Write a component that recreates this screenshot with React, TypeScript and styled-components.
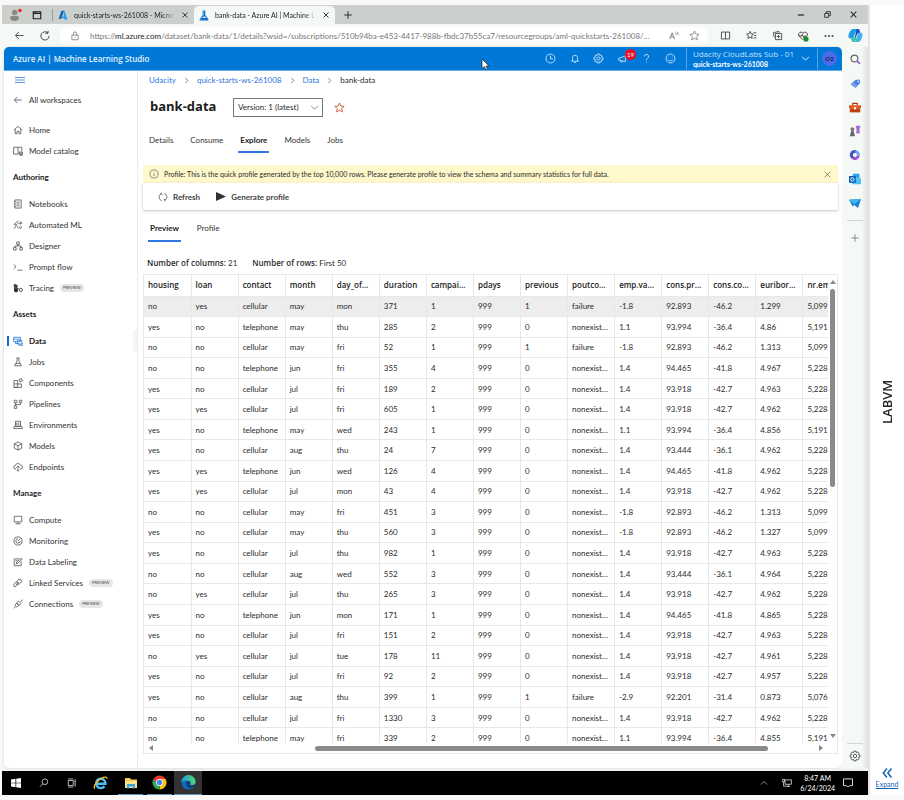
import React from "react";
import styled, { createGlobalStyle, css } from "styled-components";

const GlobalStyle = createGlobalStyle`
  *, *::before, *::after { box-sizing: border-box; }
  body { margin: 0; background: #f9f9f9; }
  body, button, select, input { font-family: Lato, "Open Sans", sans-serif; font-size: 8px; color: #2b2b2b; }
  button { border: 0; padding: 0; background: none; cursor: pointer; }
  h1, h2, ul, p { margin: 0; padding: 0; }
  ul { list-style: none; }
  svg { display: block; flex: none; }
`;

const wideBold = css`
  font-family: "Open Sans", sans-serif;
  font-weight: 600;
`;

/* ---------- frame ---------- */

const Screen = styled.div`
  display: flex;
  height: 100vh;
  min-height: 560px;
  padding: 5px 0 5px 2px;
`;

const Desktop = styled.div`
  position: relative;
  display: flex;
  flex: 1;
  flex-direction: column;
  min-width: 0;
  background: #f0f3f2;
`;

const LabPanel = styled.aside`
  display: flex;
  flex-direction: column;
  align-items: center;
  width: 36px;
  padding: 32px 0 6px;
  background: #fff;
  border-left: 2px solid #e4e4e4;
`;

const LabName = styled.div`
  display: flex;
  flex: 1;
  align-items: center;
  justify-content: center;
  writing-mode: vertical-rl;
  rotate: 180deg;
  font: 600 13px "Open Sans", sans-serif;
  color: #222;
`;

const ExpandLink = styled.a`
  display: flex;
  flex-direction: column;
  align-items: center;
  font-size: 7px;
  line-height: 10px;
  color: #1565b5;
`;

/* ---------- browser chrome ---------- */

const TabStrip = styled.div`
  display: flex;
  align-items: center;
  height: 19px;
  padding-left: 8px;
  background: #cbd0cc;
`;

const StripButton = styled.button<{ $wide?: boolean }>`
  display: grid;
  place-items: center;
  width: ${(p) => (p.$wide ? "30px" : "26px")};
  height: 18px;
`;

const WindowButtons = styled.div`
  display: flex;
  margin: 0 2px 0 auto;
`;

const BrowserTab = styled.div<{ $active?: boolean }>`
  display: flex;
  align-items: center;
  align-self: flex-end;
  gap: 6px;
  width: 141px;
  height: 18px;
  padding: 0 5px;
  border-radius: 5px 5px 0 0;
  ${(p) => p.$active && css`background: #f4f9f6;`}
`;

const TabLabel = styled.span`
  flex: 1;
  white-space: nowrap;
  font-size: 7px;
  color: #222;
  mask-image: linear-gradient(90deg, #000 88%, transparent);
`;

const StripDivider = styled.i`
  width: 1px;
  height: 12px;
  background: #989c99;
`;

const AddressBar = styled.div`
  display: flex;
  align-items: center;
  height: 23px;
  padding-left: 4px;
  background: #f4f9f6;
`;

const Pill = styled.div`
  display: flex;
  flex: 1;
  align-items: center;
  gap: 10px;
  min-width: 0;
  height: 18px;
  margin: 0 4px 0 2px;
  padding: 0 8px 0 10px;
  border-radius: 9px;
  background: #fff;
`;

const Url = styled.span`
  flex: 1;
  white-space: nowrap;
  color: #777;
  b { font-weight: 400; color: #222; }
`;

const Body = styled.div`
  display: flex;
  flex: 1;
  min-height: 0;
  padding-left: 2px;
  background: #f4f9f6;
`;

const Page = styled.div`
  display: flex;
  flex: 1;
  flex-direction: column;
  min-width: 0;
  overflow: hidden;
  border-radius: 5px;
  background: #fff;
  box-shadow: 0 0 2px #c5cac7;
`;

const EdgeRail = styled.div`
  display: flex;
  flex-direction: column;
  align-items: center;
  width: 26px;
  background: linear-gradient(90deg, #f4f9f6 75%, #dfe4e1);
`;

const RailButton = styled.button`
  display: grid;
  place-items: center;
  width: 24px;
  height: 24px;
`;

const RailLine = styled.i<{ $bottom?: boolean }>`
  width: 16px;
  height: 1px;
  margin: ${(p) => (p.$bottom ? "auto 0 0" : "5px 0")};
  background: #d3d8d5;
`;

/* ---------- studio header ---------- */

const StudioBar = styled.header`
  display: flex;
  align-items: center;
  height: 24px;
  padding: 0 5px 0 9px;
  border-bottom: 1px solid #66aee8;
  background: #0078d7;
  color: #fff;
`;

const StudioName = styled.b`
  ${wideBold}
  margin-right: auto;
  color: #e6f2fc;
`;

const BarButton = styled.button`
  position: relative;
  display: grid;
  place-items: center;
  width: 24px;
  height: 20px;
  color: #cfe6fa;
`;

const CountBadge = styled.span`
  position: absolute;
  top: 0;
  right: -1px;
  width: 11px;
  height: 11px;
  border-radius: 6px;
  background: #e81123;
  font-size: 6px;
  line-height: 11px;
  color: #fff;
`;

const Workspace = styled.button`
  display: flex;
  align-items: center;
  gap: 7px;
  margin-left: 3px;
  padding: 0 7px 0 6px;
  border: solid #5ba7e6;
  border-width: 0 1px;
  color: #fff;
  text-align: left;
  line-height: 11px;
  span { display: block; font-family: "Open Sans", sans-serif; color: #c4e0f8; }
  b { display: block; font-size: 7px; }
`;

const Avatar = styled.button`
  width: 15px;
  height: 15px;
  margin-left: 4px;
  border-radius: 8px;
  background: #4b6bea;
  font-size: 6px;
  font-weight: 700;
  color: #12204f;
`;

/* ---------- navigation ---------- */

const Columns = styled.div`
  display: flex;
  flex: 1;
  min-height: 0;
`;

const Nav = styled.nav`
  width: 134px;
  border-right: 1px solid #ebebeb;
  color: #333;
`;

const Hamburger = styled.button`
  display: block;
  height: 18px;
  padding-left: 11px;
`;

const NavHeading = styled.h2`
  padding-left: 9px;
  font-size: 8px;
  line-height: 32px;
  color: #222;
`;

const NavLink = styled.a<{ $active?: boolean; $spaced?: boolean }>`
  display: flex;
  align-items: center;
  gap: 6px;
  height: 21px;
  margin-bottom: ${(p) => (p.$spaced ? "9px" : "0")};
  padding-left: ${(p) => (p.$active ? "6px" : "9px")};
  color: ${(p) => (p.$active ? "#1b1b1b" : "#333")};
  font-weight: ${(p) => (p.$active ? 700 : 400)};
  text-decoration: none;
  ${(p) =>
    p.$active &&
    css`
      margin-left: 3px;
      border-right: 4px solid #f3f6f5;
      background: linear-gradient(#1a62d6, #1a62d6) no-repeat left center / 2px 10px;
    `}
`;

const PreviewTag = styled.small`
  padding: 0 3px;
  border-radius: 5px;
  background: #e6e6e6;
  font-size: 4px;
  line-height: 8px;
  color: #444;
`;

/* ---------- content ---------- */

const Content = styled.main`
  display: flex;
  flex: 1;
  flex-direction: column;
  min-width: 0;
  padding: 0 4px 14px 5px;
`;

const Crumbs = styled.nav`
  display: flex;
  align-items: center;
  gap: 7px;
  height: 18px;
  padding-left: 6px;
  font-size: 8px;
  a { color: #2f76dd; text-decoration: none; }
`;

const TitleRow = styled.div`
  display: flex;
  align-items: center;
  height: 36px;
  padding-left: 7px;
`;

const Title = styled.h1`
  width: 83px;
  padding-bottom: 2px;
  font: 700 13px "Open Sans", sans-serif;
  color: #1b1b1b;
`;

const SelectBox = styled.label`
  display: grid;
  align-items: center;
  width: 90px;
  height: 19px;
  margin-right: 11px;
  border: 1px solid #777;
  > * { grid-area: 1 / 1; }
  > svg { justify-self: end; margin-right: 3px; pointer-events: none; }
`;

const VersionSelect = styled.select`
  appearance: none;
  height: 17px;
  padding: 0 4px;
  border: 0;
  background: transparent;
`;

const TabList = styled.div<{ $sub?: boolean }>`
  display: flex;
  gap: ${(p) => (p.$sub ? "14px" : "13px")};
  height: ${(p) => (p.$sub ? "29px" : "28px")};
  margin-bottom: 12px;
  padding-left: ${(p) => (p.$sub ? "5px" : "4px")};
`;

const Tab = styled.button<{ $active?: boolean }>`
  padding: 3px 2px 0;
  border-bottom: 2px solid ${(p) => (p.$active ? "#2f78e0" : "transparent")};
  font-weight: ${(p) => (p.$active ? 700 : 400)};
  color: ${(p) => (p.$active ? "#1b1b1b" : "#333")};
`;

const Banner = styled.div`
  display: flex;
  align-items: center;
  gap: 5px;
  height: 18px;
  padding: 0 6px;
  background: #fff8cb;
  font-size: 7px;
  p { flex: 1; }
`;

const Toolbar = styled.div`
  display: flex;
  align-items: center;
  gap: 16px;
  height: 27px;
  margin-bottom: 3px;
  padding-left: 15px;
  border-radius: 0 0 2px 2px;
  box-shadow: 0 1px 3px #c4c4c4;
`;

const ToolButton = styled.button`
  display: flex;
  align-items: center;
  gap: 5px;
  font-weight: 700;
  color: #444;
`;

const Counts = styled.p`
  display: flex;
  gap: 15px;
  height: 20px;
  padding-left: 4px;
  line-height: 18px;
  b { ${wideBold} }
`;

const Panel = styled.section`
  display: grid;
  flex: 1;
  grid-template-columns: minmax(0, 1fr) 9px;
  grid-template-rows: minmax(0, 1fr) 10px;
  min-height: 0;
  border: 1px solid #e8e8e8;
`;

const TableClip = styled.div`
  overflow: hidden;
`;

const Table = styled.table`
  width: calc(100% + 22px);
  height: calc(100% + 6px);
  border-collapse: collapse;
  table-layout: fixed;
  tr:nth-child(1) td { background: #ededed; }
`;

const cell = css`
  overflow: hidden;
  padding: 0 0 0 4px;
  border: solid #e8e8e8;
  border-width: 0 0 1px 1px;
  white-space: nowrap;
  text-align: left;
  line-height: 10px;
  &:first-child { border-left: 0; }
`;

const HeadCell = styled.th`
  ${cell}
  ${wideBold}
  height: 21px;
  color: #1b1b1b;
`;

const Cell = styled.td`
  ${cell}
`;

const ScrollColumn = styled.div`
  display: grid;
  grid-template-rows: 14px 45fr 55fr 14px;
  justify-items: center;
  align-items: center;
`;

const ScrollRow = styled.div`
  display: grid;
  grid-template-columns: 14px 24fr 69fr 7fr 14px;
  align-items: center;
  justify-items: center;
`;

const Thumb = styled.i<{ $row?: boolean }>`
  border-radius: 3px;
  background: #8b8b8b;
  ${(p) =>
    p.$row
      ? css`grid-column: 3; width: 100%; height: 5px;`
      : css`grid-row: 2; width: 5px; height: 100%;`}
`;

/* ---------- taskbar ---------- */

const TaskBar = styled.footer`
  display: flex;
  align-items: center;
  height: 24px;
  margin-top: 3px;
  background: #000;
  color: #fff;
`;

const TaskButton = styled.button<{ $open?: boolean; $front?: boolean }>`
  display: grid;
  place-items: center;
  width: ${(p) => (p.$open ? "25px" : "28px")};
  height: 24px;
  margin-left: ${(p) => (p.$open ? "4px" : p.$front ? "2px" : "0")};
  border-bottom: 1px solid ${(p) => (p.$open || p.$front ? "#5f93bd" : "transparent")};
  background: ${(p) => (p.$front ? "#333" : "none")};
`;

const Tray = styled.div`
  display: flex;
  align-items: center;
  gap: 3px;
  margin-left: auto;
  padding-right: 10px;
`;

const TrayButton = styled.button`
  display: grid;
  place-items: center;
  width: 20px;
  height: 20px;
`;

const Clock = styled.time`
  font-size: 7px;
  line-height: 10px;
  text-align: center;
`;

const Pointer = styled.div`
  position: absolute;
  top: 53px;
  left: 479px;
  pointer-events: none;
`;

/* ---------- icons ---------- */

const shapes: Record<string, string> = {
  back: "M14 8H2M7 3L2 8l5 5",
  reload: "M13.5 8a5.5 5.5 0 1 1-1.6-4M12 1v3.4H8.6",
  lock: "M3 6.5h10V14H3zM5.5 6.5V4a2.5 2.5 0 0 1 5 0v2.5M8 9.5v1.5",
  close: "M3 3l10 10M13 3L3 13",
  plus: "M8 2v12M2 8h12",
  minus: "M3 8h10",
  restore: "M3 6h7v7H3zM6 6V3h7v7h-3",
  window: "M2 3h12v11H2zM2 5.5h12M5 5.5V3",
  star: "M8 1.500l2 4.400 4.800.5-3.600 3.200 1 4.800L8 12l-4.200 2.400 1-4.800L1.200 6.400 6 5.900z",
  split: "M2 3h12v10H2zM8 3v10",
  favorites: "M6 2l1.500 3.500 3.500.5-2.700 2.500.6 3.700L6 10.500 2.800 12.200l.6-3.700L.8 6 4.500 5.500zM11 4h4M12 8h3M11 11.500h4",
  collections: "M3 10.500L2 4l8-2 .5 2M5 5h9v9H5zM9.500 7v5M7 9.500h5",
  heart: "M8 13L2.500 7.500a3 3 0 0 1 5.500-3 3 3 0 0 1 5.500 3L11 10M2 8h4l1-2 2 4 1-2h2",
  clock: "M8 1.500a6.500 6.500 0 1 0 0 13 6.500 6.500 0 0 0 0-13M8 4v4.500h3.500",
  bell: "M4 11.500V6a4 4 0 0 1 8 0v5.500h1.500H2.500zM6.500 13.500h3",
  gear: "M6.700 1.500h2.600l.5 2 1.800-.9 1.800 1.800-.9 1.800 2 .5v2.600l-2 .5.9 1.800-1.800 1.800-1.800-.9-.5 2H6.700l-.5-2-1.800.9-1.800-1.800.9-1.800-2-.5V6.700l2-.5-.9-1.800 1.800-1.800 1.800.9zM8 5.700a2.300 2.300 0 1 0 0 4.600 2.300 2.300 0 0 0 0-4.600",
  horn: "M1 7l11-4v9L1 10zM4 10.500a2 2 0 0 0 4 1",
  help: "M5 5a3 3 0 1 1 4.500 2.500C8.300 8.200 8 9 8 10.500M8 13v1",
  smile: "M8 1.500a6.500 6.500 0 1 0 0 13 6.500 6.500 0 0 0 0-13M5.500 5.500v1M10.500 5.500v1M4.500 9.500a4 4 0 0 0 7 0",
  down: "M2 5l6 6 6-6",
  up: "M2 11l6-6 6 6",
  right: "M5 2l6 6-6 6",
  home: "M1.500 8L8 2l6.500 6M3.500 6.500V14h3v-4h3v4h3V6.500",
  catalog: "M8 13H1V2h13v6M8 2v11M10 9.500h5v4h-5zM11 15h4M10 11.500h5",
  notebook: "M3 1.500h10v13H3zM5.500 5h5M5.500 8h5M5.500 11h5M1.500 4H4M1.500 8H4M1.500 12H4",
  automl: "M8 1L2 7h4l-4 7M7 5h7M11 2l3 3-3 2M8 9a2 2 0 1 0 3 2M12 9.500a2 2 0 1 1-1 4",
  designer: "M6 1.500h4v4H6zM1 10.500h4v4H1zM11 10.500h4v4h-4zM8 5.500v2.500M3 10.500V8h10v2.500",
  prompt: "M1 4l4 3.500L1 11M7 13h8",
  data: "M1 2h11v7H1zM1 5h11M4 9v3h6M7 7h7v6H7zM10 13v2h5v-4",
  flask: "M6 1.500h4M6.500 1.500v5L2.500 14h11l-4-7.500v-5M4.500 10.500h7",
  components: "M1.500 4h6v11h-6M1.500 4v11M1.500 9.500h12V15h-12M10 2l4-1 1 4-4 1z",
  pipelines: "M2 2h4v4H2zM10 2h4v4h-4zM2 11h4v4H2zM4 6v5M12 6v3H4",
  environments: "M4 2h8v8H4zM6 4v4M9 4v4M2 10h12M1 13.500h14M2 10l-1 3.500M14 10l1 3.500",
  cube: "M8 1.500l6 3v7l-6 3-6-3v-7zM2 4.500l6 3 6-3M8 7.500v7",
  cloud: "M5 11H3.500a2.500 2.500 0 0 1 0-5A4.500 4.500 0 0 1 12 5a3 3 0 0 1 .5 6H11M8 6v8M5.500 9L8 6.500 10.500 9M6 14h4",
  monitor: "M2 2h12v9H2zM8 11v3M4 14h8",
  gauge: "M8 1.500a6.500 6.500 0 1 0 0 13 6.500 6.500 0 0 0 0-13M8 4.500a3.500 3.500 0 1 0 3.500 3.500M7.500 8.500L12 4",
  label: "M13 7v7H2V3h8M5 11l1-3 7-6 1.500 1.500-7 6.500zM4 6h3",
  link: "M9 2l4 1 1 3-4 4-3-1-1-3zM7 6l-3 1-3 4 1 3 3-1 4-4M5 11l5-5",
  plug: "M9 3.500L12.500 7 10 10 6 6zM12 5l3-4M5.500 7L9 10.500 6 13 3 10zM4 12l-3 3",
  info: "M8 1.500a6.500 6.500 0 1 0 0 13 6.500 6.500 0 0 0 0-13M8 7v4.500M8 4.500v1",
  sync: "M6 14A6.200 6.200 0 0 1 4.500 3M5.500 1L4.500 3.500 7 4.500M10 2a6.200 6.200 0 0 1 1.500 11M10.500 15l1-2.500L9 11.500",
  search: "M9.500 1.500a4.500 4.500 0 1 0 0 9 4.500 4.500 0 0 0 0-9M6.300 9.200L1.500 14",
  railSearch: "M6.500 1.500a5 5 0 1 0 0 10 5 5 0 0 0 0-10",
  taskView: "M2 4h8v8H2zM2 1.500h8M2 14.500h8M13 2v12M12 6h2",
  network: "M5 3h10v7H5zM10 10v3M7 13.500h6M1 2h3v4H1zM2.500 6v7H7",
  note: "M2 2.500h12v9h-4l-2 2-2-2H2z",
  expand: "M8 2L3 8l5 6M14 2L9 8l5 6",
  read: "M1 13L5 3l4 10M2.500 9.500h5M10 3a4 4 0 0 1 1.500 3M12 1a6 6 0 0 1 2.500 5",
};

type IconProps = { name: string; size?: number; color?: string; weight?: number };

const Icon = ({ name, size = 10, color = "currentColor", weight = 1.3 }: IconProps) => (
  <svg width={size} height={size} viewBox="0 0 16 16" fill="none" stroke={color} strokeWidth={weight} aria-hidden>
    <path d={shapes[name]} />
  </svg>
);

const Arrow = ({ d }: { d: string }) => (
  <svg width="6" height="6" viewBox="0 0 6 6" fill="#888"><path d={d} /></svg>
);

const TracingIcon = () => (
  <svg width="10" height="10" viewBox="0 0 16 16" fill="none" stroke="#333" strokeWidth="1.300">
    <path d="M2 2l5 2-1 4-4-1zM6 8l4 2M3 8v5h4" fill="#444" />
    <path d="M2 9h5v5H3z" fill="#222" />
    <circle cx="12.500" cy="11" r="2.500" />
  </svg>
);

const EdgeIcon = () => (
  <svg width="15" height="15" viewBox="0 0 16 16">
    <defs>
      <linearGradient id="edgeTop" x1="0" x2="1"><stop stopColor="#1a9de0" /><stop offset="1" stopColor="#57d66b" /></linearGradient>
    </defs>
    <circle cx="8" cy="8" r="7.500" fill="#0f6cbd" />
    <path d="M.5 8A7.500 7.500 0 0 1 15.500 7c.2 3-2.500 4.200-5.500 3.500 1-1 .8-4-2.500-4.500C4 5.500 1 7 .5 8z" fill="url(#edgeTop)" />
    <path d="M6 7.500c-2 3 .5 7 4.500 6.500 2-.3 3.500-1.500 4.200-2.800C12 12.500 9.500 11.500 9 10c1-.8.9-3.500-1.200-3.500C7 6.500 6.400 6.900 6 7.500z" fill="#0b3f86" />
    <path d="M9 10c1.700 1.300 4.200 1 6 .2L16 12l-1.300-.8C12 12.500 9.500 11.500 9 10z" fill="#333" />
    <path d="M8 6.500c1.500.3 2 2.300 1 3.500-.9-.9-1.700-2-1-3.500z" fill="#333" />
  </svg>
);

const ChromeIcon = () => (
  <svg width="15" height="15" viewBox="0 0 16 16">
    <path d="M8 8V4.250h6.500A7.500 7.500 0 0 1 8 15.500z" fill="#fbc116" />
    <path d="M8 8v7.500A7.500 7.500 0 0 1 1.500 4.250z" fill="#2da94f" />
    <path d="M1.500 4.250A7.500 7.500 0 0 1 14.500 4.250H8L5 9z" fill="#e33b2e" />
    <circle cx="8" cy="8" r="3.700" fill="#fff" />
    <circle cx="8" cy="8" r="2.900" fill="#4285f4" />
  </svg>
);

const ExplorerIcon = () => (
  <svg width="15" height="14" viewBox="0 0 16 15" fill="none">
    <path d="M3.500 8.300h9.800A5 5 0 1 0 12.300 11" stroke="#4cc2f5" strokeWidth="2.600" />
    <path d="M2 13.500C-.5 12 4 5 9 2.500c3-1.500 6-2 6 .5" stroke="#f5c22d" strokeWidth="1.500" />
  </svg>
);

const FolderIcon = () => (
  <svg width="14" height="12" viewBox="0 0 14 12">
    <path d="M1 1h5l1 1.500h6V11H1z" fill="#f4c95a" />
    <path d="M1 4h12v7H1z" fill="#fbe08e" />
    <path d="M3 7h8v4.500H9V9.500H5v2H3z" fill="#36a4dc" />
  </svg>
);

const StartIcon = () => (
  <svg width="10" height="10" viewBox="0 0 10 10" fill="#fff">
    <path d="M0 1.500L4.500.8v3.900H0zM5.200.7L10 0v4.700H5.200zM0 5.300h4.500v3.900L0 8.500zM5.200 5.300H10V10l-4.800-.7z" />
  </svg>
);

const CopilotIcon = () => (
  <svg width="15" height="15" viewBox="0 0 16 16">
    <path d="M6 1h5l1 3.500H8L5.500 11H2.500C0 11 .3 8 1 6s2-5 5-5z" fill="#1f9de8" />
    <path d="M1 8c0 2 1 3 2.500 3H6l2-4 1 4-2 4H6c-2 0-2.500-2-3-4z" fill="#3bbf9a" />
    <path d="M10 15H5.500c2.500 0 3-2.500 4-5.500S11 5 13.500 5c2.500 0 2.200 3 1.500 5s-2 5-5 5z" fill="#3fb6ee" />
    <path d="M9 1h1.500c1.500 0 2 1 2.500 4-3-.5-3.500 2-4.500 5L7.500 9z" fill="#1c4fc0" />
  </svg>
);

const AzureIcon = () => (
  <svg width="10" height="10" viewBox="0 0 16 16">
    <path d="M5.500 1h4L5.500 14H1z" fill="#0c65b5" />
    <path d="M9 1h1.500L15 15h-4L4.500 10.500h5z" fill="#2b9be8" />
  </svg>
);

const MlIcon = () => (
  <svg width="10" height="11" viewBox="0 0 16 16">
    <path d="M6 0h4v7l5 7q.5 2-1.500 2h-11q-2 0-1.500-2l5-7z" fill="#1170c4" />
    <path d="M6 0h2v8L2 15q-1-.5-1-1l5-7z" fill="#39a9ec" />
    <path d="M5.500 12L9 9l2.500 3z" fill="#fff" />
  </svg>
);

const ProfileIcon = () => (
  <svg width="12" height="14" viewBox="0 0 12 14">
    <path d="M0 10q0-2 2-2h5q2 0 2 2-1 3-4.500 3T0 10zM2 4.500a2.700 2.700 0 1 1 5.400 0 2.700 2.700 0 0 1-5.400 0z" fill="#8d8681" />
    <circle cx="10" cy="2.500" r="1.700" fill="#f31d1d" />
  </svg>
);

const railIcons: [string, React.ReactNode][] = [
  ["Search", <svg width="11" height="11" viewBox="0 0 16 16" fill="none"><path d={shapes.railSearch} stroke="#666" strokeWidth="1.800" /><path d="M10 10l4.500 4.500" stroke="#9a5bd0" strokeWidth="2.500" /></svg>],
  ["Shopping", <svg width="11" height="11" viewBox="0 0 16 16"><path d="M1 9l7-6 6-1 1 5-7 7z" fill="#4a80dd" /><path d="M1 9l4-3.500 6 6L8 14z" fill="#6fa0ee" /><circle cx="12" cy="5" r="1.200" fill="#fff" /></svg>],
  ["Tools", <svg width="12" height="11" viewBox="0 0 16 14"><path d="M5 4V1.500h6V4" stroke="#a83210" strokeWidth="1.500" fill="none" /><path d="M0 4h16v4H0z" fill="#e2581f" /><path d="M1 8h14v5.500H1z" fill="#c43e13" /><path d="M6.500 6.500h3v3h-3z" fill="#fff" /></svg>],
  ["Games", <svg width="12" height="12" viewBox="0 0 16 16"><circle cx="4.500" cy="5.500" r="2.500" fill="#777" /><path d="M3 8h3l2 7H1z" fill="#666" /><path d="M9 1h6v2l-1 2v4l1 2H9l1-2V5L9 3z" fill="#a56bd6" /></svg>],
  ["Microsoft 365", <svg width="12" height="12" viewBox="0 0 16 16" fill="none" strokeWidth="4"><path d="M8 3.500a4.500 4.500 0 0 1 4.500 5.500" stroke="#6fa2f5" /><path d="M12.400 9A4.500 4.500 0 0 1 5 11.500" stroke="#a24fd6" /><path d="M5.200 11.700A4.500 4.500 0 0 1 8.500 3.500" stroke="#4b4fc4" /></svg>],
  ["Outlook", <svg width="12" height="12" viewBox="0 0 16 16"><path d="M5 1h9v6H5z" fill="#28a8ea" /><path d="M4 7h12v8H4z" fill="#4fc0f4" /><path d="M0 4h9v9H0z" fill="#0a63b8" /><circle cx="4.500" cy="8.500" r="2.200" fill="none" stroke="#fff" strokeWidth="1.300" /></svg>],
  ["Drop", <svg width="12" height="11" viewBox="0 0 16 14"><path d="M0 2l16-1-4 12-5-4-2 2z" fill="#1583d0" /><path d="M0 2l16-1L7 8z" fill="#43b6ef" /></svg>],
];

/* ---------- data ---------- */

const columns = "housing loan contact month day_of… duration campai… pdays previous poutco… emp.va… cons.pr… cons.co… euribor… nr.em".split(" ");

const records = `no yes cellular may mon 371 1 999 1 failure -1.8 92.893 -46.2 1.299 5,099
yes no telephone may thu 285 2 999 0 nonexist… 1.1 93.994 -36.4 4.86 5,191
no no cellular may fri 52 1 999 1 failure -1.8 92.893 -46.2 1.313 5,099
no no telephone jun fri 355 4 999 0 nonexist… 1.4 94.465 -41.8 4.967 5,228
yes no cellular jul fri 189 2 999 0 nonexist… 1.4 93.918 -42.7 4.963 5,228
yes yes cellular jul fri 605 1 999 0 nonexist… 1.4 93.918 -42.7 4.962 5,228
yes no telephone may wed 243 1 999 0 nonexist… 1.1 93.994 -36.4 4.856 5,191
yes no cellular aug thu 24 7 999 0 nonexist… 1.4 93.444 -36.1 4.962 5,228
yes yes telephone jun wed 126 4 999 0 nonexist… 1.4 94.465 -41.8 4.962 5,228
yes yes cellular jul mon 43 4 999 0 nonexist… 1.4 93.918 -42.7 4.962 5,228
no no cellular may fri 451 3 999 0 nonexist… -1.8 92.893 -46.2 1.313 5,099
yes no cellular may thu 560 3 999 0 nonexist… -1.8 92.893 -46.2 1.327 5,099
yes no cellular jul thu 982 1 999 0 nonexist… 1.4 93.918 -42.7 4.963 5,228
no no cellular aug wed 552 3 999 0 nonexist… 1.4 93.444 -36.1 4.964 5,228
no yes cellular jul thu 265 3 999 0 nonexist… 1.4 93.918 -42.7 4.962 5,228
yes no telephone jun mon 171 1 999 0 nonexist… 1.4 94.465 -41.8 4.865 5,228
yes no cellular jul fri 151 2 999 0 nonexist… 1.4 93.918 -42.7 4.963 5,228
no yes cellular jul tue 178 11 999 0 nonexist… 1.4 93.918 -42.7 4.961 5,228
yes no cellular jul fri 92 2 999 0 nonexist… 1.4 93.918 -42.7 4.957 5,228
yes no cellular aug thu 399 1 999 1 failure -2.9 92.201 -31.4 0.873 5,076
no no cellular jul fri 1330 3 999 0 nonexist… 1.4 93.918 -42.7 4.962 5,228
no no telephone may fri 339 2 999 0 nonexist… 1.1 93.994 -36.4 4.855 5,191`
  .split("\n")
  .map((line) => line.split(" "));

type NavItem = { label: string; icon: string; preview?: boolean; active?: boolean };

const navGroups: { heading?: string; items: NavItem[] }[] = [
  { items: [{ label: "Home", icon: "home" }, { label: "Model catalog", icon: "catalog" }] },
  {
    heading: "Authoring",
    items: [
      { label: "Notebooks", icon: "notebook" },
      { label: "Automated ML", icon: "automl" },
      { label: "Designer", icon: "designer" },
      { label: "Prompt flow", icon: "prompt" },
      { label: "Tracing", icon: "tracing", preview: true },
    ],
  },
  {
    heading: "Assets",
    items: [
      { label: "Data", icon: "data", active: true },
      { label: "Jobs", icon: "flask" },
      { label: "Components", icon: "components" },
      { label: "Pipelines", icon: "pipelines" },
      { label: "Environments", icon: "environments" },
      { label: "Models", icon: "cube" },
      { label: "Endpoints", icon: "cloud" },
    ],
  },
  {
    heading: "Manage",
    items: [
      { label: "Compute", icon: "monitor" },
      { label: "Monitoring", icon: "gauge" },
      { label: "Data Labeling", icon: "label" },
      { label: "Linked Services", icon: "link", preview: true },
      { label: "Connections", icon: "plug", preview: true },
    ],
  },
];

/* ---------- sections ---------- */

const BrowserChrome = () => (
  <>
    <TabStrip>
      <ProfileIcon />
      <StripButton $wide aria-label="Tab actions"><Icon name="window" color="#222" weight={1.8} /></StripButton>
      <StripDivider />
      <BrowserTab>
        <AzureIcon />
        <TabLabel>quick-starts-ws-261008 - Micros</TabLabel>
        <button aria-label="Close tab"><Icon name="close" size={8} weight={1.8} /></button>
      </BrowserTab>
      <BrowserTab $active>
        <MlIcon />
        <TabLabel>bank-data - Azure AI | Machine L</TabLabel>
        <button aria-label="Close tab"><Icon name="close" size={8} weight={1.8} /></button>
      </BrowserTab>
      <StripButton aria-label="New tab"><Icon name="plus" weight={1.6} /></StripButton>
      <WindowButtons>
        <StripButton aria-label="Minimize"><Icon name="minus" weight={2} /></StripButton>
        <StripButton aria-label="Restore"><Icon name="restore" size={9} weight={1.6} /></StripButton>
        <StripButton aria-label="Close"><Icon name="close" size={9} weight={1.8} /></StripButton>
      </WindowButtons>
    </TabStrip>
    <AddressBar>
      <StripButton aria-label="Back"><Icon name="back" size={11} color="#444" /></StripButton>
      <StripButton aria-label="Reload"><Icon name="reload" size={12} color="#444" /></StripButton>
      <Pill>
        <Icon name="lock" color="#777" />
        <Url>
          https://<b>ml.azure.com</b>/dataset/bank-data/1/details?wsid=/subscriptions/510b94ba-e453-4417-988b-fbdc37b55ca7/resourcegroups/aml-quickstarts-261008/...
        </Url>
        <Icon name="read" color="#666" />
        <Icon name="star" size={11} color="#888" />
      </Pill>
      <StripButton aria-label="Split screen"><Icon name="split" size={11} color="#444" /></StripButton>
      <StripButton aria-label="Favorites"><Icon name="favorites" size={11} color="#444" /></StripButton>
      <StripButton aria-label="Collections"><Icon name="collections" size={11} color="#444" /></StripButton>
      <StripButton aria-label="Browser essentials">
        <svg width="12" height="12" viewBox="0 0 16 16" fill="none" stroke="#444" strokeWidth="1.300">
          <path d={shapes.heart} />
          <circle cx="12" cy="12" r="3.500" fill="#1b8a2e" stroke="none" />
        </svg>
      </StripButton>
      <StripButton aria-label="More">
        <svg width="10" height="4" viewBox="0 0 10 4" fill="#444"><circle cx="1.500" cy="2" r="1" /><circle cx="5" cy="2" r="1" /><circle cx="8.500" cy="2" r="1" /></svg>
      </StripButton>
      <StripButton aria-label="Copilot"><CopilotIcon /></StripButton>
    </AddressBar>
  </>
);

const Header = () => (
  <StudioBar>
    <StudioName>Azure AI | Machine Learning Studio</StudioName>
    <BarButton aria-label="History"><Icon name="clock" size={11} /></BarButton>
    <BarButton aria-label="Notifications"><Icon name="bell" /></BarButton>
    <BarButton aria-label="Settings"><Icon name="gear" size={11} /></BarButton>
    <BarButton aria-label="Announcements"><Icon name="horn" /><CountBadge>19</CountBadge></BarButton>
    <BarButton aria-label="Help"><Icon name="help" size={11} /></BarButton>
    <BarButton aria-label="Feedback"><Icon name="smile" size={11} /></BarButton>
    <Workspace>
      <div><span>Udacity CloudLabs Sub - 01</span><b>quick-starts-ws-261008</b></div>
      <Icon name="down" size={9} weight={1.6} />
    </Workspace>
    <Avatar aria-label="Account">O2</Avatar>
  </StudioBar>
);

const SideNav = () => (
  <Nav>
    <Hamburger aria-label="Toggle navigation">
      <svg width="10" height="6" viewBox="0 0 10 6" fill="#5b97ea"><path d="M0 0h10v1H0zM0 2.500h10v1H0zM0 5h10v1H0z" /></svg>
    </Hamburger>
    <NavLink href="#workspaces" $spaced><Icon name="back" color="#555" />All workspaces</NavLink>
    {navGroups.map((group, i) => (
      <React.Fragment key={i}>
        {group.heading && <NavHeading>{group.heading}</NavHeading>}
        <ul>
          {group.items.map((item) => (
            <li key={item.label}>
              <NavLink href={"#" + item.icon} $active={item.active}>
                {item.icon === "tracing" ? <TracingIcon /> : <Icon name={item.icon} color={item.active ? "#2b82d9" : "#555"} />}
                {item.label}
                {item.preview && <PreviewTag>PREVIEW</PreviewTag>}
              </NavLink>
            </li>
          ))}
        </ul>
      </React.Fragment>
    ))}
  </Nav>
);

const DataTable = () => (
  <Panel>
    <TableClip>
      <Table>
        <thead><tr>{columns.map((name) => <HeadCell key={name}>{name}</HeadCell>)}</tr></thead>
        <tbody>
          {records.map((record, r) => (
            <tr key={r}>{record.map((value, c) => <Cell key={c}>{value}</Cell>)}</tr>
          ))}
        </tbody>
      </Table>
    </TableClip>
    <ScrollColumn>
      <Arrow d="M0 5l3-4 3 4z" />
      <Thumb />
      <span />
      <Arrow d="M0 1l3 4 3-4z" />
    </ScrollColumn>
    <ScrollRow>
      <Arrow d="M5 0L1 3l4 3z" />
      <Thumb $row />
      <span />
      <Arrow d="M1 0l4 3-4 3z" />
    </ScrollRow>
  </Panel>
);

export default function App() {
  return (
    <Screen>
      <GlobalStyle />
      <Desktop>
        <BrowserChrome />
        <Body>
          <Page>
            <Header />
            <Columns>
              <SideNav />
              <Content>
                <Crumbs aria-label="Breadcrumb">
                  <a href="#udacity">Udacity</a><Icon name="right" size={7} />
                  <a href="#workspace">quick-starts-ws-261008</a><Icon name="right" size={7} />
                  <a href="#data">Data</a><Icon name="right" size={7} />
                  <span>bank-data</span>
                </Crumbs>
                <TitleRow>
                  <Title>bank-data</Title>
                  <SelectBox>
                    <VersionSelect aria-label="Version"><option>Version: 1 (latest)</option></VersionSelect>
                    <Icon name="down" size={9} color="#666" />
                  </SelectBox>
                  <button aria-label="Favorite"><Icon name="star" size={11} color="#d0502f" /></button>
                </TitleRow>
                <TabList role="tablist">
                  {["Details", "Consume", "Explore", "Models", "Jobs"].map((name) => (
                    <Tab key={name} role="tab" $active={name === "Explore"}>{name}</Tab>
                  ))}
                </TabList>
                <Banner>
                  <Icon name="info" color="#777" />
                  <p>Profile: This is the quick profile generated by the top 10,000 rows. Please generate profile to view the schema and summary statistics for full data.</p>
                  <button aria-label="Dismiss"><Icon name="close" size={9} color="#666" /></button>
                </Banner>
                <Toolbar>
                  <ToolButton><Icon name="sync" color="#555" />Refresh</ToolButton>
                  <ToolButton>
                    <svg width="10" height="9" viewBox="0 0 10 9" fill="#333"><path d="M0 0l10 4.500L0 9z" /></svg>
                    Generate profile
                  </ToolButton>
                </Toolbar>
                <TabList role="tablist" $sub>
                  <Tab role="tab" $active>Preview</Tab>
                  <Tab role="tab">Profile</Tab>
                </TabList>
                <Counts>
                  <span><b>Number of columns:</b> 21</span>
                  <span><b>Number of rows:</b> First 50</span>
                </Counts>
                <DataTable />
              </Content>
            </Columns>
          </Page>
          <EdgeRail>
            {railIcons.map(([label, icon]) => <RailButton key={label} aria-label={label}>{icon}</RailButton>)}
            <RailLine />
            <RailButton aria-label="Customize"><Icon name="plus" color="#777" /></RailButton>
            <RailLine $bottom />
            <RailButton aria-label="Settings"><Icon name="gear" size={12} color="#555" /></RailButton>
          </EdgeRail>
        </Body>
        <TaskBar>
          <TaskButton aria-label="Start"><StartIcon /></TaskButton>
          <TaskButton aria-label="Search"><Icon name="search" color="#ddd" /></TaskButton>
          <TaskButton aria-label="Task view"><Icon name="taskView" color="#ddd" /></TaskButton>
          <TaskButton aria-label="Internet Explorer"><ExplorerIcon /></TaskButton>
          <TaskButton aria-label="File Explorer" $open><FolderIcon /></TaskButton>
          <TaskButton aria-label="Chrome" $open><ChromeIcon /></TaskButton>
          <TaskButton aria-label="Edge" $front><EdgeIcon /></TaskButton>
          <Tray>
            <TrayButton aria-label="Hidden icons"><Icon name="up" size={8} color="#ddd" /></TrayButton>
            <TrayButton aria-label="Network"><Icon name="network" color="#ddd" /></TrayButton>
            <Clock>8:47 AM<br />6/24/2024</Clock>
            <TrayButton aria-label="Notifications"><Icon name="note" size={12} color="#ddd" /></TrayButton>
          </Tray>
        </TaskBar>
        <Pointer>
          <svg width="9" height="13" viewBox="0 0 9 13"><path d="M1 1v9.500l2.300-2L5 12l1.500-.7L5 8h3z" fill="#fff" stroke="#333" strokeWidth=".8" /></svg>
        </Pointer>
      </Desktop>
      <LabPanel>
        <LabName>LABVM</LabName>
        <ExpandLink href="#expand"><Icon name="expand" size={12} color="#1565b5" weight={2} />Expand</ExpandLink>
      </LabPanel>
    </Screen>
  );
}
